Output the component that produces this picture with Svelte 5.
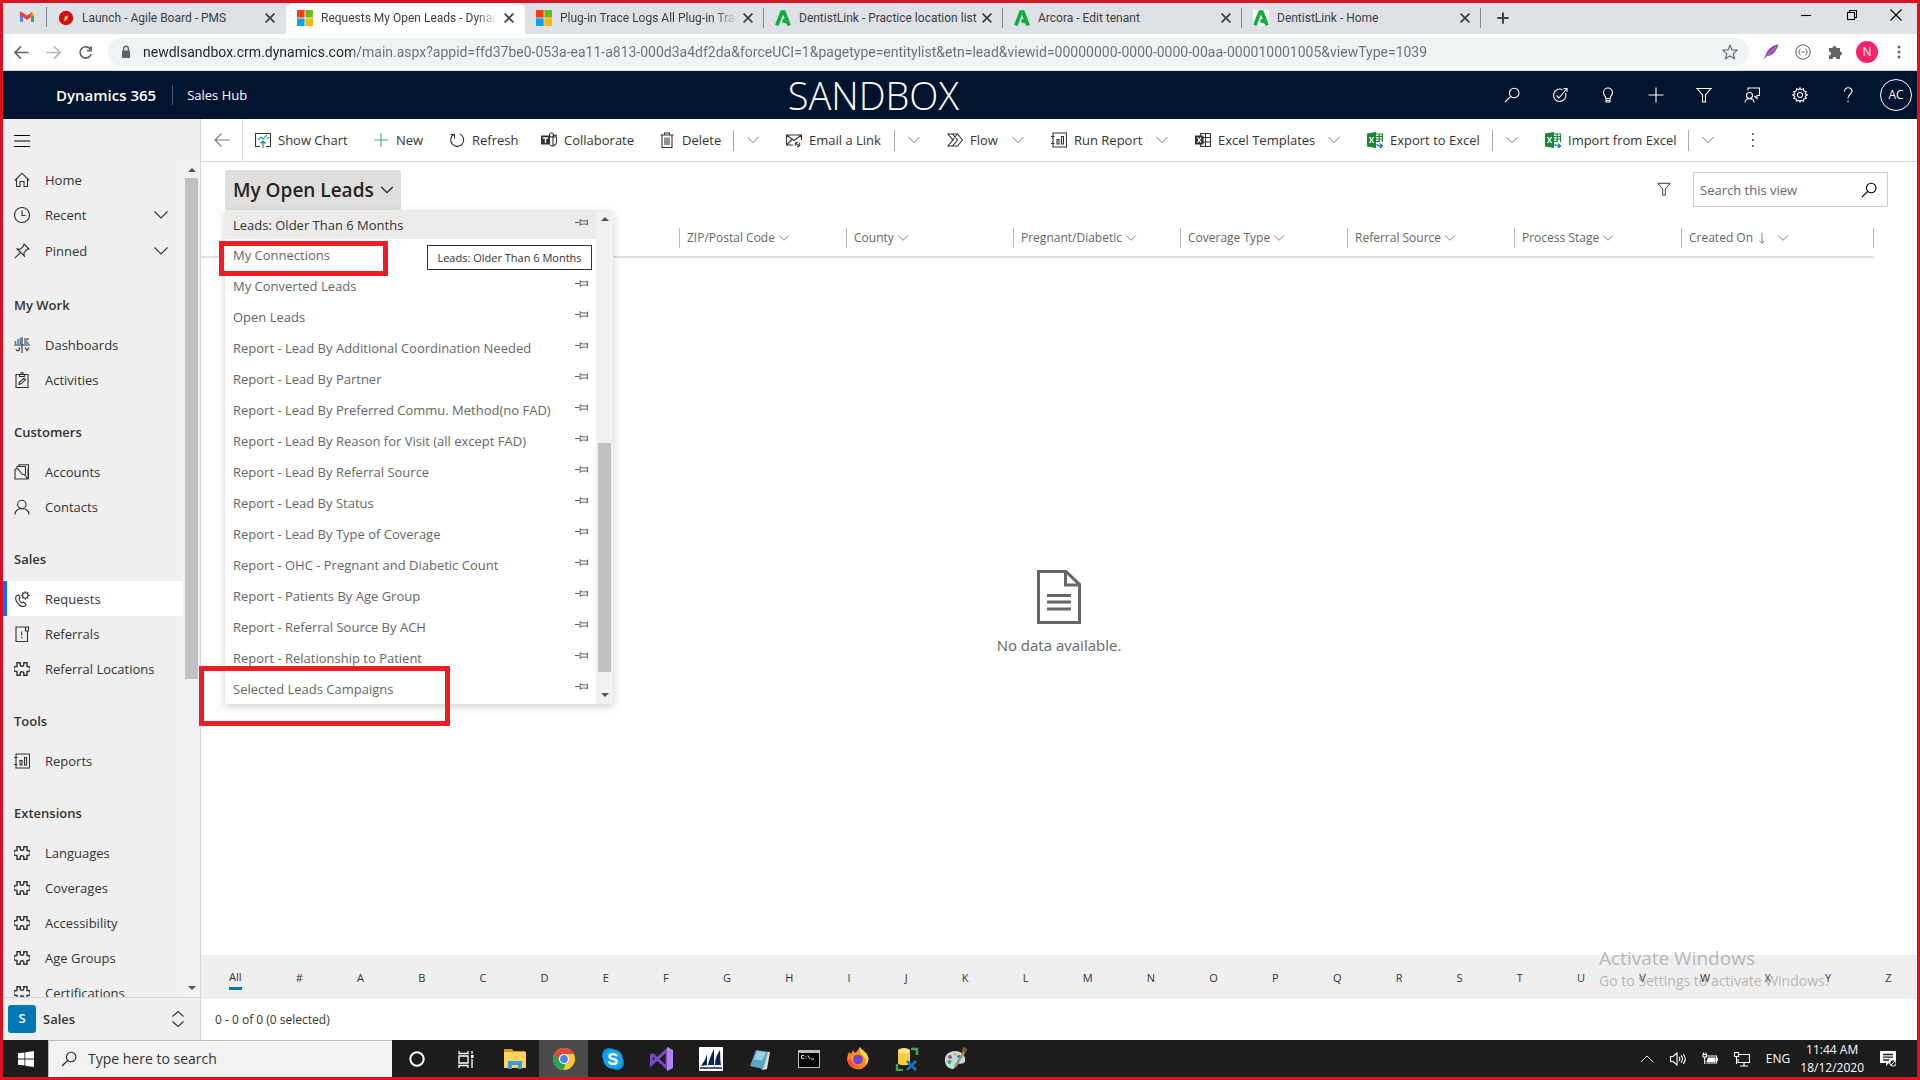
<script>
  const tabs = [
    { title: 'Launch - Agile Board - PMS', icon: 'launch' },
    { title: 'Requests My Open Leads - Dynamics 365', icon: 'ms', active: true, long: true },
    { title: 'Plug-in Trace Logs All Plug-in Trace Logs', icon: 'ms', long: true },
    { title: 'DentistLink - Practice location list', icon: 'a' },
    { title: 'Arcora - Edit tenant', icon: 'a' },
    { title: 'DentistLink - Home', icon: 'a', boxed: true },
  ];

  const url =
    'newdlsandbox.crm.dynamics.com/main.aspx?appid=ffd37be0-053a-ea11-a813-000d3a4df2da&forceUCI=1&pagetype=entitylist&etn=lead&viewid=00000000-0000-0000-00aa-000010001005&viewType=1039';

  const headerIcons = ['search', 'task', 'bulb', 'plus', 'filter', 'assist', 'gear', 'help'];

  const commands = [
    { label: 'Show Chart', icon: 'chart' },
    { label: 'New', icon: 'new' },
    { label: 'Refresh', icon: 'refresh' },
    { label: 'Collaborate', icon: 'teams' },
    { label: 'Delete', icon: 'trash', menu: true, split: true },
    { label: 'Email a Link', icon: 'mail', menu: true, split: true },
    { label: 'Flow', icon: 'flow', menu: true },
    { label: 'Run Report', icon: 'report', menu: true },
    { label: 'Excel Templates', icon: 'template', menu: true },
    { label: 'Export to Excel', icon: 'excel', menu: true, split: true },
    { label: 'Import from Excel', icon: 'excel', menu: true, split: true },
  ];

  const groups = [
    { name: 'My Work', items: [['Dashboards', 'dashboard'], ['Activities', 'activity']] },
    { name: 'Customers', items: [['Accounts', 'account'], ['Contacts', 'contact']] },
    { name: 'Sales', items: [['Requests', 'phone'], ['Referrals', 'referral'], ['Referral Locations', 'puzzle']] },
    { name: 'Tools', items: [['Reports', 'report']] },
    {
      name: 'Extensions',
      items: [
        ['Languages', 'puzzle'],
        ['Coverages', 'puzzle'],
        ['Accessibility', 'puzzle'],
        ['Age Groups', 'puzzle'],
        ['Certifications', 'puzzle'],
      ],
    },
  ];

  const views = [
    'Leads: Older Than 6 Months',
    'My Connections',
    'My Converted Leads',
    'Open Leads',
    'Report - Lead By Additional Coordination Needed',
    'Report - Lead By Partner',
    'Report - Lead By Preferred Commu. Method(no FAD)',
    'Report - Lead By Reason for Visit (all except FAD)',
    'Report - Lead By Referral Source',
    'Report - Lead By Status',
    'Report - Lead By Type of Coverage',
    'Report - OHC - Pregnant and Diabetic Count',
    'Report - Patients By Age Group',
    'Report - Referral Source By ACH',
    'Report - Relationship to Patient',
    'Selected Leads Campaigns',
  ];

  const columns = ['ZIP/Postal Code', 'County', 'Pregnant/Diabetic', 'Coverage Type', 'Referral Source', 'Process Stage', 'Created On'];
  const letters = ['All', '#', ...'ABCDEFGHIJKLMNOPQRSTUVWXYZ'];
  const apps = ['Cortana', 'Task View', 'File Explorer', 'Chrome', 'Skype', 'Visual Studio', 'Dynamics', 'Notepad', 'Command Prompt', 'Firefox', 'SQL Tools', 'Paint'];

  const paths = {
    search: 'M15 6a4.8 4.8 0 1 1-9.600 0a4.800 4.800 0 0 1 9.600 0M6.700 9.300L1 15',
    task: 'M13.500 6a6.200 6.200 0 1 1-3-3.300M4.500 8.500l2.500 2.500L14.500 2M11.500 1.500h3.500v3.500',
    bulb: 'M6 11.500c0-2-2.500-3-2.500-6a4.500 4.500 0 0 1 9 0c0 3-2.500 4-2.500 6zM6 11.500v3.500h4v-3.500M6 13.500h4',
    plus: 'M8 0.500v15M0.500 8h15',
    new: 'M8 1v14M1 8h14',
    filter: 'M1 1.500h14L9.500 8v7h-3V8z',
    assist: 'M8.500 8.500a3 3 0 1 1-6 0a3 3 0 0 1 6 0M1 15.500c0-5 9-5 9 0M4 3.500V1h11.500v7.500H13v3L10.500 9',
    gear: 'M8 .8l1.200 2 2.200-1 .5 2.300 2.300.5-1 2.200 2 1.200-2 1.200 1 2.200-2.300.5-.5 2.300-2.200-1-1.200 2-1.200-2-2.200 1-.5-2.300-2.300-.5 1-2.200-2-1.200 2-1.200-1-2.200 2.300-.5.5-2.300 2.200 1zM10.500 8a2.500 2.500 0 1 1-5 0a2.500 2.500 0 0 1 5 0',
    help: 'M4.500 4.500c0-5 7.500-5 7.500-.5 0 3-4 3.500-4 7.500M8 13.500v1.800',
    refresh: 'M5 2.200a6.500 6.500 0 1 0 6-.2M1.500 2.500h4v4',
    trash: 'M1.500 3h13M5.500 3V1h5v2M3 3v12.500h10V3M6 5.500v7.500M8 5.500v7.500M10 5.500v7.500',
    mail: 'M7 13H.5V3h15v5M.5 3L8 8.500 15.500 3M.5 13L6 7.500M10 13.500c-2-1 0-4 2-3M13 11c2 1 0 4.500-2 3.500M10 11.500l3 2',
    flow: 'M1 2h9.500l5 6-5 6H1l5-6zM5.500 2l5 6-5 6M1 14L10.500 2',
    report: 'M2 1h13.500v14H2zM0 4.500h3.500M0 11.500h3.500M6 12V7.500h2V12zM10.500 12V4.500h2V12z',
    home: 'M0.800 8.500L8 1.200l7.200 7.300M2.500 7v7.500h3.500V9.500h4v5h3.500V7',
    recent: 'M15.500 8a7.500 7.500 0 1 1-15 0a7.500 7.500 0 0 1 15 0M8 3.500V8.500h3.500',
    pinned: 'M10 1l5 5-2 .6-3 3 .3 3.400L3 6l3.400.2 3-3zM6.500 9.500L.8 15.200',
    activity: 'M2 2.500h12v13H2zM5.500 4.500v-2h1.500V.8h2v1.700h1.500v2zM5 12.500l.5-2.200 4.500-4 1.500 1.500-4.500 4z',
    account: 'M1 5v10h13V4.500M1 5h3l4.500 5.500h2L13.500 15M3 4.500V2.500h8.500v8M5 2V.8h9.500V15',
    contact: 'M12 5.500a4.200 4.200 0 1 1-8.400 0a4.200 4.200 0 0 1 8.400 0M1 15.500c0-8 14-8 14 0',
    phone: 'M3 4.500c-4 3 2 11 6 11 2 0 3-1 3-2L9.500 11l-1.500 1c-1.500-.5-3-2.800-3-4.200L6.200 6.700 4.500 4zM14 4.500a2.700 2.700 0 1 1-5.400 0a2.700 2.700 0 0 1 5.400 0M11.300.2v1.600M11.300 7.200v1.600M7 4.500h1.600M14 4.500h1.900M8.300 1.500l1.100 1.100M13.200 6.400l1.100 1.100M14.300 1.500l-1.100 1.100M8.300 7.500l1.100-1.100',
    referral: 'M11.500 1H2v14.500h11.500V5M11.500 1h3v4h-3zM7.700 5.500v4M7.700 11v1.200',
    puzzle: 'M3 1.800h3.200v1.600a1.800 1.800 0 0 0 3.600 0V1.800H13v3.700h.9a1.700 1.700 0 0 1 0 5H13v3.700H9.800v-1.600a1.800 1.800 0 0 0-3.600 0v1.600H3v-3.700h-.9a1.700 1.700 0 0 1 0-5H3z',
    pushpin: 'M0 8h5M5.500 4.500v7M5.500 5.500l2 .8h5.500M5.500 10.500l2-.8h5.500M13.200 5v6',
    chevron: 'M1.500 4.500L8 11l6.500-6.500',
    back: 'M15.500 8H1M7.500 1.500L1 8l6.500 6.500',
    forward: 'M.5 8H15M8.500 1.500L15 8l-6.500 6.500',
    reload: 'M13.500 5A6 6 0 1 0 14 9.500M14 1.500v4.500H9.500',
    cross: 'M3 3l10 10M13 3L3 13',
    menu: 'M0 2.500h16M0 8h16M0 13.500h16',
    down: 'M8 1v14M4.500 11.500L8 15l3.500-3.500',
    updown: 'M2.500 5.500L8 .5l5.500 5M2.500 10.500l5.500 5 5.500-5',
    caret: 'M1 11.500L8 4.500l7 7',
    star: 'M8 1.200l2 4.700 5 .4-3.800 3.300 1.200 5L8 12l-4.400 2.600 1.200-5L1 6.300l5-.4z',
  };
</script>

{#snippet line(name)}
  <svg class="ico {name}" viewBox="0 0 16 16" aria-hidden="true"><path d={paths[name]} /></svg>
{/snippet}

{#snippet favicon(name)}
  <svg class="fav" viewBox="0 0 16 16" aria-hidden="true">
    {#if name === 'ms'}
      <path fill="#f9400c" d="M0 0h7.600v7.600H0z" /><path fill="#72bb1c" d="M8.400 0H16v7.600H8.400z" />
      <path fill="#05a4f0" d="M0 8.400h7.600V16H0z" /><path fill="#fdb606" d="M8.400 8.400H16V16H8.400z" />
    {:else if name === 'launch'}
      <circle cx="8" cy="8" r="7.200" fill="#d20e0e" /><path d="M10.500 5L9 10l-3.500 1.500L7 6.500z" fill="#f5a800" /><circle cx="8" cy="8" r="1.200" fill="#fff" />
    {:else}
      <path fill="none" stroke="#10ac3c" stroke-width="3.600" d="M1.800 15.500L7 2h2l5.200 13.500M7.500 10.500l5 1.500" />
    {/if}
  </svg>
{/snippet}

{#snippet command(name)}
  {#if name === 'chart'}
    <svg class="ico" viewBox="0 0 16 16" aria-hidden="true"><path d="M5 14.500H.5V1.500h15v13H11" /><path stroke="#1f73c0" d="M8 16V9M5.500 11.500L8 9l2.500 2.500" /><path class="green" d="M3 8l3-3 2 2 4-4M12 7l2-2" /></svg>
  {:else if name === 'teams'}
    <svg class="ico" viewBox="0 0 16 16" aria-hidden="true"><path d="M9 5h6.500v5a4 4 0 0 1-7 2.500M12 5v8M12.500 3a2 2 0 1 1-4 0a2 2 0 0 1 4 0M15.500 2.500a1.200 1.200 0 1 1-2.400 0" /><path class="solid" d="M0 3.500h9v9H0z" /><path class="paper" d="M2 6h5M4.500 6v5" /></svg>
  {:else if name === 'template'}
    <svg class="ico" viewBox="0 0 16 16" aria-hidden="true"><path d="M5.500 1.500h10v13h-10zM5.500 5.500h10M5.500 10h10M10.500 1.500v13" /><path class="solid" d="M0 3.500h8.500v9H0z" /><path class="paper" d="M2.500 5.500l3.500 5M6 5.500l-3.500 5" /></svg>
  {:else if name === 'excel'}
    <svg class="ico" viewBox="0 0 16 16" aria-hidden="true"><path fill="#0f8a33" stroke="none" d="M0 1.500L9 0v16l-9-1.500z" /><path stroke="#0f8a33" stroke-width="1.200" d="M9 2h6.500v8M9 4.500h6.500M9 7h6.500M9 9.500h3M12.200 2v8" /><path class="paper" d="M2.500 5.200l4 5.800M6.500 5.200l-4 5.800" /><path stroke="#1f73c0" stroke-width="1.500" d="M10 12c0 2 2 2 5 2M13 11.500l2.500 2.500-2.500 2" /></svg>
  {:else}
    {@render line(name)}
  {/if}
{/snippet}

<div class="screen">
  <header class="tabs">
    <button class="gmail" aria-label="Gmail">
      <svg viewBox="0 0 16 16" aria-hidden="true"><path fill="#4285f4" d="M1 4h3v9H2a1 1 0 0 1-1-1z" /><path fill="#34a853" d="M12 4h3v8a1 1 0 0 1-1 1h-2z" /><path fill="#fbbc04" d="M12 4l1.500-1L15 4v2l-3 2z" /><path fill="#ea4335" d="M1 4c0-2 1.500-1.500 2-1l5 3.700L13 3l-1 5-4 3-4-3-3-2z" /></svg>
    </button>
    {#each tabs as tab}
      <div class="tab" class:active={tab.active}>
        <span class="favbox" class:boxed={tab.boxed}>{@render favicon(tab.icon)}</span>
        <button class="title" class:long={tab.long}>{tab.title}</button>
        <button class="close" aria-label="Close tab">{@render line('cross')}</button>
      </div>
    {/each}
    <button class="newtab" aria-label="New tab">{@render line('plus')}</button>
    <div class="winbtns">
      <button aria-label="Minimize"><svg class="ico" viewBox="0 0 16 16"><path d="M3 8.500h10" /></svg></button>
      <button aria-label="Restore"><svg class="ico" viewBox="0 0 16 16"><path d="M3.500 5.500h7v7h-7zM5.500 5.500v-2h7v7h-2" /></svg></button>
      <button aria-label="Close"><svg class="ico" viewBox="0 0 16 16"><path d="M2.500 2.500l11 11M13.500 2.500l-11 11" /></svg></button>
    </div>
  </header>

  <div class="address">
    <button class="nav" aria-label="Back">{@render line('back')}</button>
    <button class="nav dim" aria-label="Forward">{@render line('forward')}</button>
    <button class="nav" aria-label="Reload">{@render line('reload')}</button>
    <div class="omnibox">
      <svg class="lock" viewBox="0 0 10 14" aria-hidden="true"><path fill="#5f6368" d="M1 5.500h8V13H1z" /><path fill="none" stroke="#5f6368" stroke-width="1.400" d="M2.700 6V3.500a2.300 2.300 0 0 1 4.600 0V6" /></svg>
      <input aria-label="Address" value={url} readonly />
      <button aria-label="Bookmark">{@render line('star')}</button>
    </div>
    <div class="extensions">
      <button aria-label="Feather"><svg viewBox="0 0 16 16"><path fill="#8e44ad" d="M15.500.5C10 1 4.500 5 3 10.500L.5 15.500 4 12c6-.5 9-4.500 11.500-11.500z" /><path stroke="#d7b5e8" stroke-width=".8" d="M4 11.500L13 3" /></svg></button>
      <button aria-label="JSON viewer"><svg viewBox="0 0 16 16"><circle cx="8" cy="8" r="7.200" fill="none" stroke="#555" /><path fill="none" stroke="#555" d="M5.500 5C4 5 5 8 3.500 8 5 8 4 11 5.500 11M10.500 5c1.500 0 .5 3 2 3-1.500 0-.5 3-2 3M6.500 8h3" /></svg></button>
      <button aria-label="Extensions"><svg viewBox="0 0 16 16"><path fill="#5f6368" d="M2 4h3.500a2 2 0 1 1 4 0H13v3.500a2 2 0 1 1 0 4V15H9.500a2 2 0 0 0-4 0H2v-3.500a2 2 0 0 0 0-4z" /></svg></button>
      <button class="profile" aria-label="Profile">N</button>
      <button aria-label="Menu"><svg viewBox="0 0 16 16" fill="#5f6368"><circle cx="8" cy="3" r="1.500" /><circle cx="8" cy="8" r="1.500" /><circle cx="8" cy="13" r="1.500" /></svg></button>
    </div>
  </div>

  <div class="appbar">
    <div class="brand"><strong>Dynamics 365</strong><a href="#hub">Sales Hub</a></div>
    <div class="sandbox">SANDBOX</div>
    <div class="tools">
      {#each headerIcons as name}
        <button aria-label={name}>{@render line(name)}</button>
      {/each}
      <button class="avatar">AC</button>
    </div>
  </div>

  <div class="body">
    <aside>
      <button class="hamburger" aria-label="Site map">{@render line('menu')}</button>
      <div class="navwrap">
        <nav>
          <a href="#home">{@render line('home')}Home</a>
          <a href="#recent">{@render line('recent')}Recent<span class="chev">{@render line('chevron')}</span></a>
          <a class="tall" href="#pinned">{@render line('pinned')}Pinned<span class="chev">{@render line('chevron')}</span></a>
          {#each groups as group}
            <h2>{group.name}</h2>
            {#each group.items as [label, icon]}
              <a href="#{label}" class:current={label === 'Requests'}>
                {#if icon === 'dashboard'}
                  <svg class="ico" viewBox="0 0 16 16" aria-hidden="true"><path d="M0 8h16M8 0v16M10 2h5M10 4h3.500M10 6h5M11 10.500l2 3 2-3M2 12a1.800 1.800 0 1 0 3-1.500" /><path stroke="#3b7fb8" stroke-width="1.500" d="M1.500 7V4M4 7V2M6.300 7V1" /></svg>
                {:else}
                  {@render line(icon)}
                {/if}{label}
              </a>
            {/each}
          {/each}
        </nav>
        <div class="scroll side"><i class="up"></i><b></b><i class="down"></i></div>
      </div>
      <button class="area"><span class="badge">S</span><span class="areaname">Sales</span>{@render line('updown')}</button>
    </aside>

    <main>
      <div class="commands">
        <button class="goback" aria-label="Go back">{@render line('back')}</button>
        {#each commands as c}
          <div class="cmd">
            <button class="label">{@render command(c.icon)}{c.label}</button>
            {#if c.menu}
              <button class="more" class:split={c.split} aria-label="{c.label} options">{@render line('chevron')}</button>
            {/if}
          </div>
        {/each}
        <button class="overflow" aria-label="More commands"><svg viewBox="0 0 16 16" fill="#444"><circle cx="8" cy="2" r="1" /><circle cx="8" cy="8" r="1" /><circle cx="8" cy="14" r="1" /></svg></button>
      </div>

      <div class="viewbar">
        <div class="selector">
          <button class="viewname">My Open Leads{@render line('chevron')}</button>
          <div class="dropdown">
            <ul>
              {#each views as view, i}
                <li class:hover={i === 0}>
                  <button class="view">{view}</button>
                  {#if i !== 1}<button class="pin" aria-label="Pin {view}">{@render line('pushpin')}</button>{/if}
                </li>
              {/each}
            </ul>
            <div class="scroll list"><i class="up"></i><b></b><i class="down"></i></div>
            <div class="tooltip" role="tooltip">Leads: Older Than 6 Months</div>
            <div class="mark first"></div>
            <div class="mark second"></div>
          </div>
        </div>
        <button class="filterbtn" aria-label="Filter">{@render line('filter')}</button>
        <div class="searchbox">
          <input type="text" placeholder="Search this view" aria-label="Search this view" />
          <button aria-label="Start search">{@render line('search')}</button>
        </div>
      </div>

      <table>
        <thead>
          <tr>
            <th class="lead"></th>
            {#each columns as col, i}
              <th class:last={i === 6}>
                <button>{col}{#if i === 6}{@render line('down')}{/if}{@render line('chevron')}</button>
              </th>
            {/each}
          </tr>
        </thead>
      </table>

      <section class="empty">
        <svg viewBox="0 0 44 54" aria-hidden="true"><path fill="none" stroke="#666" stroke-width="3" d="M1.500 1.500H29L42.500 14.500V52.500H1.500zM28.500 2v13H42" /><path stroke="#666" stroke-width="3" d="M10 25.500h24M10 32h24M10 39h24" /></svg>
        <p>No data available.</p>
      </section>

      <div class="letters">
        {#each letters as l, i}
          <button class:on={i === 0}>{l}</button>
        {/each}
      </div>
      <footer>0 - 0 of 0 (0 selected)</footer>
      <div class="watermark"><p class="big">Activate Windows</p><p>Go to Settings to activate Windows.</p></div>
    </main>
  </div>

  <div class="taskbar">
    <button class="start" aria-label="Start"><svg viewBox="0 0 16 16" fill="#fff"><path d="M0 2.300L6.500 1.400v6.200H0zM7.300 1.300L16 0v7.600H7.300zM0 8.400h6.500v6.200L0 13.700zM7.300 8.400H16V16l-8.700-1.300z" /></svg></button>
    <label class="find">{@render line('search')}<input type="text" placeholder="Type here to search" aria-label="Type here to search" /></label>
    {#each apps as app}
      <button class="app" class:open={app === 'Chrome'} aria-label={app}>
        <svg viewBox="0 0 24 24" aria-hidden="true">
          {#if app === 'Cortana'}
            <circle cx="12" cy="12" r="6.700" fill="none" stroke="#fff" stroke-width="2" />
          {:else if app === 'Task View'}
            <path fill="none" stroke="#fff" stroke-width="1.300" d="M5 4v2.500h9V4M5 9h9v7H5zM5 21v-2.500h9V21M18 4v3M18 12v9" /><path fill="#fff" d="M17 8h2.500v3H17z" />
          {:else if app === 'File Explorer'}
            <path fill="#d89b12" d="M1 2h8l1.500 2H22v3H1z" /><path fill="#fcd462" d="M1 5h22v16H1z" /><path fill="#3d9be0" d="M5 22v-8h14v8h-4v-4H9v4z" />
          {:else if app === 'Chrome'}
            <circle cx="12" cy="12" r="11" fill="#fcc934" /><path fill="#e04a3a" d="M2.500 6.500A11 11 0 0 1 22 7H12a5 5 0 0 0-4.500 7z" /><path fill="#25a352" d="M2.500 6.500L8 15a5 5 0 0 0 5.500 1.700L11.500 23A11 11 0 0 1 2.500 6.500z" /><circle cx="12" cy="12" r="5" fill="#fff" /><circle cx="12" cy="12" r="3.900" fill="#4285f4" />
          {:else if app === 'Skype'}
            <circle cx="8" cy="8" r="7" fill="#0a8fd8" /><circle cx="16" cy="16" r="7" fill="#0a8fd8" /><circle cx="12" cy="12" r="9.800" fill="#12a5ee" /><path fill="none" stroke="#fff" stroke-width="2.300" stroke-linecap="round" d="M15.500 8.500c-2-2.200-7-1.700-7 1 0 3.500 7.200 1.500 7.200 5 0 3-5.500 3.300-7.500.7" />
          {:else if app === 'Visual Studio'}
            <path fill="none" stroke="#7a48c4" stroke-width="3" d="M1.500 7v10L17 3v18L2 7" /><path fill="#b184f2" d="M17 0l6 3v18l-6 3z" />
          {:else if app === 'Dynamics'}
            <path fill="#fff" d="M0 0h24v24H0z" /><path fill="#0b2353" d="M2 19c2-3 5-7 6-12v11zM9 18c1-5 3-10 6-16v16zM16 18c0-6 2-11 5-15 .5 6 0 11 1 15z" /><path stroke="#0b2353" stroke-width="1.500" d="M1 21h22" />
          {:else if app === 'Notepad'}
            <path fill="#d8dde0" d="M9 4l13 1-3 17-5 1z" /><path fill="#5aa7bd" d="M8 3l12 2-5 17-13-3z" /><path fill="#9cd3e0" d="M9 4l9 1.500-4 8-8-1z" />
          {:else if app === 'Command Prompt'}
            <path fill="#b9bcc0" d="M1 3h22v18H1z" /><path fill="#050505" d="M2 6h20v14H2z" /><path fill="none" stroke="#ddd" d="M7 8.500H4.500v3H7M9 9v.8M9 11v.8M11 8.500l2 3.500M14 12h3" />
          {:else if app === 'Firefox'}
            <path fill="#ff8a16" d="M3 5l2 2 2-4 2 3c2-1 3-4 5-6 1 3 8 5 8.500 12A10.700 10.700 0 0 1 1.200 13C1 10 2 7 3 5z" /><path fill="#ff3d4a" d="M1.200 13c2 9 15 10 19 3-4 7-15 4-15-4z" /><path fill="#ffd43a" d="M14 0c1 3 8 5 8.500 12-.5 3-1 5-3 6 1-7-2-9-5.500-12z" /><circle cx="12" cy="12.500" r="4.800" fill="#7143dc" />
          {:else if app === 'SQL Tools'}
            <path fill="#f7cd45" d="M3 4c0-4 12-4 12 0v12c0 3-12 3-12 0z" /><ellipse cx="9" cy="4" rx="6" ry="2.500" fill="#ffe68c" /><path fill="none" stroke="#45a04a" stroke-width="2.500" d="M16 2h6v6M2 17v6h6" /><path stroke="#1d72c0" stroke-width="2.500" d="M12 23l9-9M12 14l9 9" />
          {:else}
            <path fill="#b7dcec" d="M11 4C4 4 0 9 1 15c1 5 5 7 8 7 3 0 1-4 4-5 3-1 7 1 8-3 1-6-4-10-10-10z" /><circle cx="6" cy="10" r="2" fill="#d8433b" /><circle cx="11" cy="7.500" r="1.800" fill="#f2b632" /><circle cx="5.500" cy="15" r="2" fill="#4fa845" /><circle cx="15" cy="9.500" r="1.700" fill="#3576c9" /><path stroke="#c08a4b" stroke-width="2.500" d="M11 20L20 5" /><path stroke="#8d5a2b" stroke-width="4" d="M19.500 5L21.500 1" />
          {/if}
        </svg>
      </button>
    {/each}
    <div class="tray">
      <button aria-label="Show hidden icons">{@render line('caret')}</button>
      <button aria-label="Volume"><svg class="ico" viewBox="0 0 16 16"><path d="M.5 5.500h2.500l4-3.500v12l-4-3.500H.5zM9 6c1 1 1 3 0 4M11 4.500c2 2 2 5 0 7M13.200 3c2.500 3 2.500 7 0 10" /></svg></button>
      <button aria-label="Battery"><svg class="ico" viewBox="0 0 16 16"><path d="M1 3.500v2.500h3.500V3.500zM1.500 3.500v-2M4 3.500v-2M2.700 6v7M5.500 5h9v7h-10M15.500 7v3" /><path fill="#fff" d="M6.500 7h6.500v3.500H5z" /></svg></button>
      <button aria-label="Network"><svg class="ico" viewBox="0 0 16 16"><path d="M5 3.500h10.500v8H4V8M10 11.500v3.500M6 15h8M.5 1.500h4v4h-4zM2.500 5.500V13" /></svg></button>
      <button class="lang">ENG</button>
      <button class="clock"><span>11:44 AM</span><span>18/12/2020</span></button>
      <button class="notify" aria-label="Notifications"><svg viewBox="0 0 16 16"><path fill="#fff" d="M0 0h16v12H9l-3 3v-3H0z" /><path stroke="#1c1c1c" stroke-width="1.300" d="M3 3.500h10M3 6.200h10M3 9h6" /><circle cx="13" cy="12" r="3.200" fill="#1c1c1c" stroke="#fff" /><path stroke="#fff" d="M11 14l4-4" /></svg></button>
    </div>
  </div>
</div>

<style>
  :global(body) { margin: 0; background: #fff; }
  :global(*) { box-sizing: border-box; }
  button, input { font: inherit; color: inherit; background: none; border: 0; padding: 0; margin: 0; outline: 0; }
  button { display: flex; align-items: center; white-space: nowrap; }
  a { color: inherit; text-decoration: none; }
  p, h2, ul { margin: 0; padding: 0; list-style: none; font-weight: 400; }
  svg { flex: none; display: block; width: 16px; height: 16px; }
  .ico { fill: none; stroke: currentColor; stroke-width: 1.1; }
  .ico .green { stroke: #1fa971; }
  .ico .solid { fill: #333; stroke: none; }
  .ico .paper { stroke: #fff; stroke-width: 1.3; }

  .screen {
    display: flex;
    flex-direction: column;
    height: 100vh;
    border: 3px solid #db1020;
    overflow: hidden;
    font: 13px/20px "Open Sans", "Noto Sans", sans-serif;
    color: #333;
    background: #fff;
  }

  .tabs { display: flex; flex: none; height: 31px; background: #dee1e6; font-family: Roboto, "Open Sans", sans-serif; font-size: 12px; color: #3c4043; }
  .gmail { width: 44px; padding-left: 16px; border-right: 1px solid #85888c; height: 20px; margin-top: 4px; }
  .tab { display: flex; align-items: center; width: 239px; padding: 0 9px 2px 11px; position: relative; }
  .tab::after { content: ""; width: 1px; height: 20px; background: #85888c; position: absolute; right: 0; }
  .tab.active { background: #fff; border-radius: 8px 8px 0 0; }
  .tab.active::after, .tab:has(+ .active)::after { display: none; }
  .favbox { flex: none; margin-right: 8px; }
  .boxed { background: #fff; }
  .title { flex: 1; min-width: 0; overflow: hidden; }
  .title.long { margin-right: 4px; -webkit-mask-image: linear-gradient(90deg, #000 88%, transparent); mask-image: linear-gradient(90deg, #000 88%, transparent); }
  .tab .close { flex: none; }
  .close .ico { width: 14px; height: 14px; stroke-width: 2; }
  .newtab { margin-left: 16px; padding-bottom: 2px; }
  .newtab .ico { width: 12px; height: 12px; stroke-width: 2.6; }
  .winbtns { display: flex; margin-left: auto; color: #000; height: 23px; }
  .winbtns button { width: 46px; justify-content: center; }
  .winbtns button:last-child { width: 42px; }

  .address { display: flex; align-items: center; flex: none; height: 37px; padding: 0 10px 0 11px; border-bottom: 1px solid #dadce0; color: #5f6368; }
  .nav { width: 32px; }
  .nav .ico { width: 15px; height: 15px; stroke-width: 1.8; }
  .nav.dim { color: #b5b8bb; }
  .omnibox { display: flex; align-items: center; flex: 1; height: 28px; border-radius: 14px; background: #f0f3f4; padding: 0 11px 0 13px; margin-left: -2px; font-family: Roboto, "Open Sans", sans-serif; font-size: 14px; }
  .omnibox .lock { width: 10px; height: 14px; margin-right: 12px; }
  .omnibox input { flex: 1; min-width: 0; color: transparent; background: linear-gradient(90deg, #202124 210px, #6a6e72 210px); -webkit-background-clip: text; background-clip: text; }
  .extensions { display: flex; align-items: center; gap: 16px; margin-left: 14px; }
  .profile { width: 22px; height: 22px; border-radius: 50%; background: #fb2068; color: #fff; justify-content: center; font-size: 12px; }
  .extensions .profile { margin: 0 -3px; }

  .appbar { display: flex; align-items: center; flex: none; height: 48px; background: #00132f; color: #fff; }
  .brand { flex: 0 0 41%; display: flex; align-items: center; padding-left: 53px; }
  .brand strong { font-size: 15px; font-weight: 600; padding-right: 16px; margin-right: 14px; border-right: 1px solid #4d5a6f; }
  .sandbox { font-size: 38px; font-weight: 300; line-height: 48px; }
  .tools { flex: 1; display: flex; align-items: center; justify-content: flex-end; gap: 32px; padding-right: 5px; }
  .avatar { width: 32px; height: 32px; margin-left: -8px; border: 1px solid #fff; border-radius: 50%; justify-content: center; font-size: 12px; }

  .body { display: flex; flex: 1; min-height: 0; }
  aside { display: flex; flex-direction: column; flex: none; width: 198px; background: #efefef; border-right: 1px solid #d6d6d6; }
  .hamburger { flex: none; height: 43px; padding-left: 11px; color: #000; }
  .navwrap { display: flex; flex: 1; min-height: 0; }
  nav { flex: 1; overflow: hidden; }
  nav a { display: flex; align-items: center; gap: 15px; height: 35px; padding: 0 14px 0 11px; }
  nav .tall { height: 38px; }
  nav .current { background: #fff; box-shadow: inset 4px 0 #0d6bff; }
  nav .puzzle { stroke-width: 1.4; }
  .chev { margin-left: auto; }
  h2 { height: 57px; padding: 14px 0 0 11px; line-height: 43px; font-size: 13px; font-weight: 600; }
  .scroll { display: flex; flex-direction: column; align-items: center; flex: none; width: 17px; background: #f1f1f1; }
  .scroll b { width: 13px; background: #c1c1c1; }
  .scroll i { border: 4px solid transparent; }
  .scroll .up { border-bottom-color: #555; border-top: 0; margin: 6px 0; }
  .scroll .down { border-top-color: #555; border-bottom: 0; margin: auto 0 7px; }
  .side b { height: 60%; }
  .area { flex: none; height: 43px; padding: 0 14px 0 5px; border-top: 1px solid #d6d6d6; }
  .badge { width: 28px; height: 28px; line-height: 26px; border-radius: 3px; background: #0078b8; color: #fff; font-weight: 600; }
  .areaname { flex: 1; text-align: left; padding-left: 7px; font-weight: 600; }

  main { display: flex; flex-direction: column; flex: 1; min-width: 0; position: relative; }
  .commands { display: grid; grid-template-columns: 54px 118px 76px 92px 118px 127px 161px 104px 144px 172px 178px 196px 1fr; flex: none; height: 43px; border-bottom: 1px solid #d8d8d8; }
  .goback { width: 42px; border-right: 1px solid #d8d8d8; justify-content: center; color: #777; }
  .cmd { display: flex; align-items: center; justify-content: space-between; padding-right: 26px; }
  .label { gap: 7px; }
  .cmd:not(:has(.more)) { padding-right: 0; }
  .more { height: 21px; color: #777; }
  .more .ico { width: 14px; height: 14px; }
  .split { border-left: 1px solid #aaa; padding-left: 12px; }
  .ico.new { stroke: #3cb98a; }
  .overflow { padding-left: 4px; }

  .viewbar { display: flex; align-items: flex-start; flex: none; height: 65px; padding: 8px 29px 0 24px; }
  .selector { position: relative; }
  .viewname { height: 40px; padding: 0 7px 0 8px; gap: 6px; background: #e1dfdd; border-radius: 2px; font-size: 19px; font-weight: 600; color: #252423; }
  .viewname .ico { width: 14px; height: 14px; stroke-width: 1.6; }
  .dropdown { position: absolute; z-index: 2; top: 40px; left: 0; width: 388px; display: flex; background: #fff; border-radius: 2px; box-shadow: 0 3px 8px rgba(0, 0, 0, .18); color: #666; }
  .dropdown ul { flex: 1; }
  li { display: flex; justify-content: space-between; height: 31px; padding: 0 6px 0 8px; }
  li.hover { height: 29px; background: #edebe9; color: #333; }
  .pin { padding-bottom: 5px; color: #555; }
  .pin .ico { width: 15px; height: 15px; stroke-width: 1; }
  .list .up { margin: 7px 0 222px; }
  .list b { height: 229px; }
  .tooltip { position: absolute; top: 35px; left: 202px; width: 165px; height: 25px; border: 1px solid #333; background: #fff; color: #333; font-size: 11px; line-height: 23px; text-align: center; white-space: nowrap; }
  .mark { position: absolute; border: 5px solid #ee1c25; }
  .first { left: -6px; top: 31px; width: 169px; height: 35px; }
  .second { left: -26px; top: 456px; width: 251px; height: 60px; }
  .filterbtn { margin: 12px 22px 0 auto; }
  .filterbtn .ico { width: 14px; height: 14px; }
  .searchbox { display: flex; align-items: center; width: 195px; height: 35px; margin-top: 2px; border: 1px solid #ccc; padding: 0 10px 0 6px; color: #000; }
  .searchbox input { flex: 1; min-width: 0; }
  input::placeholder { color: #666; opacity: 1; }

  table { flex: none; width: calc(100% - 43px); table-layout: fixed; border-collapse: collapse; border-bottom: 2px solid #e1dfdd; font-size: 12px; color: #666; }
  th { width: 167px; height: 30px; padding: 0 0 8px; font-weight: 400; }
  th.lead { width: auto; }
  th.last { width: 193px; }
  th button { width: 100%; height: 20px; gap: 3px; padding-left: 7px; border-left: 1px solid #bbb; }
  .last button { border-right: 1px solid #bbb; }
  th .ico { width: 12px; height: 12px; }
  th .down.ico { margin: 0 6px 0 0; }

  .empty { flex: 1; display: flex; flex-direction: column; align-items: center; padding-top: 312px; font-size: 15px; color: #666; }
  .empty svg { width: 44px; height: 54px; margin-bottom: 11px; }
  .letters { display: flex; align-items: center; justify-content: space-between; flex: none; height: 44px; padding: 2px 25px 0 28px; background: #efefef; font-size: 11px; }
  .letters .on { border-bottom: 3px solid #0078b8; }
  footer { flex: none; height: 41px; padding-left: 14px; line-height: 41px; font-size: 12px; }
  .watermark { position: absolute; right: 83px; bottom: 49px; width: 235px; color: rgba(150, 150, 150, .65); font-size: 14px; line-height: 20px; white-space: nowrap; pointer-events: none; }
  .watermark .big { font-size: 19px; line-height: 26px; }

  .taskbar { display: flex; flex: none; height: 37px; background: #1c1c1c; color: #fff; }
  .start { width: 45px; justify-content: center; }
  .find { display: flex; align-items: center; width: 344px; padding-left: 12px; gap: 11px; background: #f2f2f2; border: solid #bbb; border-width: 1px 0 0 1px; color: #222; font-size: 14px; }
  .find input { flex: 1; }
  .find input::placeholder { color: #333; }
  .app { width: 49px; justify-content: center; }
  .app svg { width: 24px; height: 24px; }
  .open { background: #4a4a4a; }
  .tray { display: flex; align-items: center; gap: 16px; margin-left: auto; padding-right: 20px; }
  .tray .caret { width: 14px; height: 14px; }
  .lang { font-size: 12px; }
  .clock { flex-direction: column; font-size: 12px; line-height: 18px; margin-left: -6px; }
  .notify { margin-right: 1px; }
</style>
